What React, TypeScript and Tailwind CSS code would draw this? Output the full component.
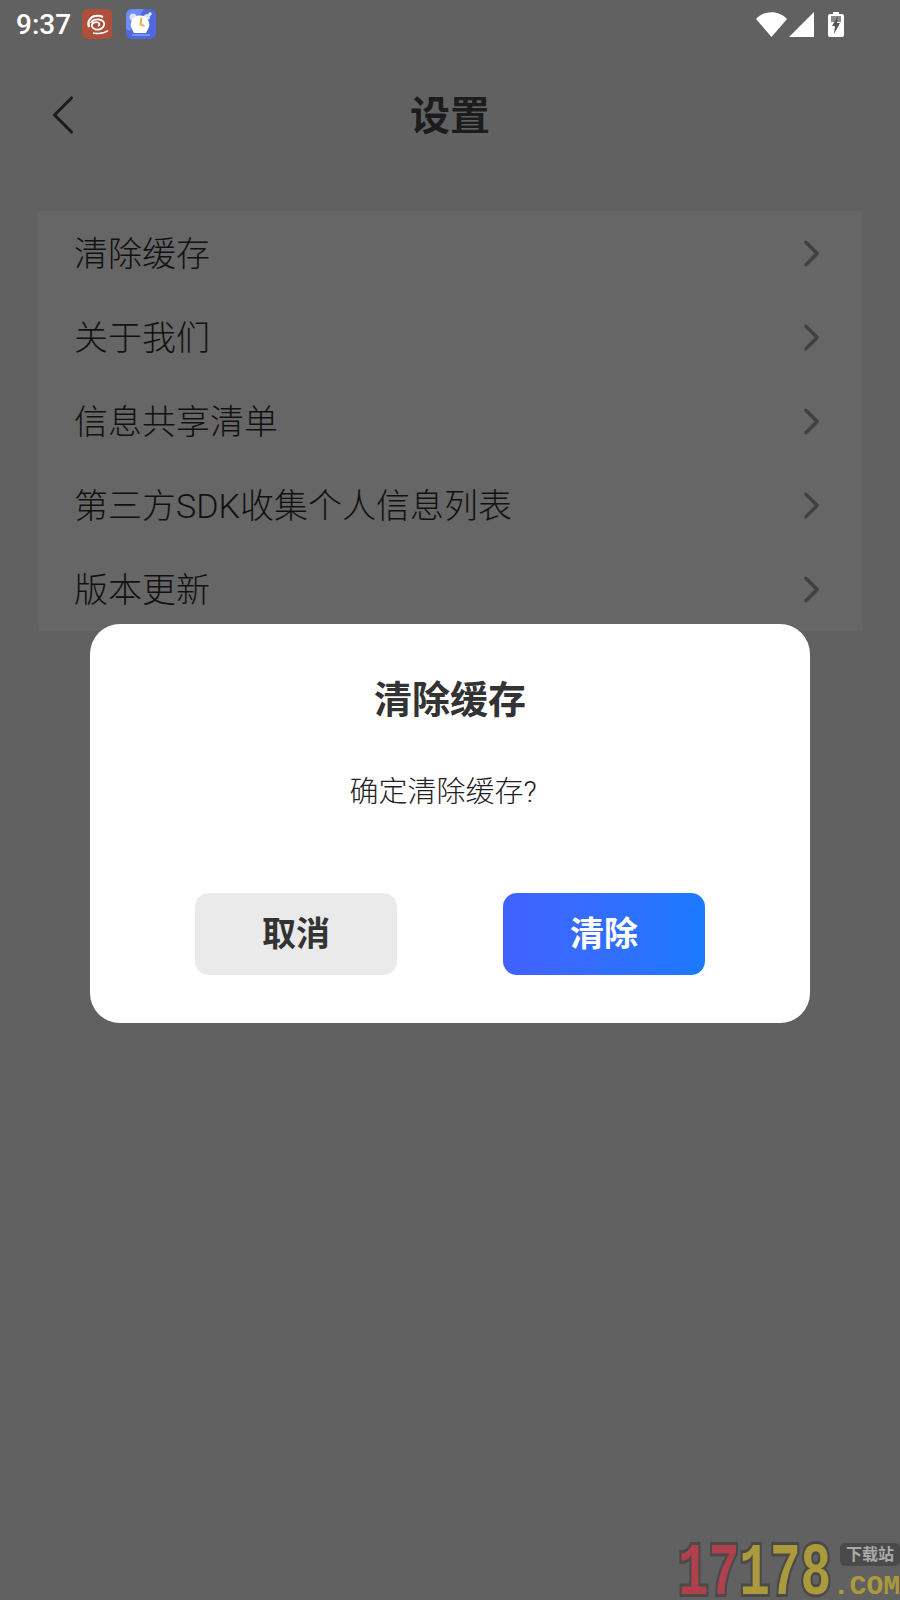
import { ChevronLeft, ChevronRight } from "lucide-react";

const rows = ["清除缓存", "关于我们", "信息共享清单", "第三方SDK收集个人信息列表", "版本更新"];

const cjk = { fontFamily: '"Roboto", "Noto Sans CJK SC", sans-serif' };
const mono = { fontFamily: '"Liberation Mono", monospace' };

function WeiboIcon() {
  return (
    <svg width="30" height="30" viewBox="0 0 30 30">
      <rect width="30" height="30" rx="5" fill="#ae4f3b" />
      <path d="M7 18c-2-5 1-10 6-11 3-.6 6 0 8 1" fill="none" stroke="#fff" strokeWidth="2.200" />
      <path d="M9 14c1-3 5-4 8-3.500 4 .6 6 3 5 6-1 3-5 4.500-8 4-3-.5-5-3-4-5 1-2 4-3 6-2 2 .8 2 3 0 3.500" fill="none" stroke="#fff" strokeWidth="1.800" />
      <path d="M11 24c5 1 11 .5 15-2.500" fill="none" stroke="#fff" strokeWidth="1.400" />
    </svg>
  );
}

function ClockIcon() {
  return (
    <svg width="30" height="30" viewBox="0 0 30 30">
      <rect width="30" height="30" rx="6" fill="#4f6ae0" />
      <path d="M0 6a6 6 0 0 1 6-6h12L4 22 0 20z" fill="#6f8cf5" />
      <circle cx="7" cy="8" r="3.500" fill="#dbe3ff" />
      <circle cx="21" cy="8" r="3" fill="#dbe3ff" />
      <path d="M14 6.500a9 9 0 0 1 8 13.500l-2 4H8l-2-4a9 9 0 0 1 8-13.500z" fill="#fff" />
      <path d="M15.500 8.500l-1 7 4 1.500" fill="none" stroke="#eda83a" strokeWidth="1.800" />
      <path d="M24 3v4M22 5h4" stroke="#fff" strokeWidth="1.200" />
      <path d="M6 26h18" stroke="#8aa0f0" strokeWidth="1.500" />
    </svg>
  );
}

function Watermark() {
  return (
    <div className="absolute bottom-0 right-0 h-[60px] w-[222px]">
      <div
        className="absolute left-0 top-[11px] flex origin-left scale-x-[0.69] text-[74px] font-bold leading-[46px] [-webkit-text-stroke:6px_#4a4a4a] [paint-order:stroke_fill]"
        style={mono}
      >
        <span className="text-[#b0404c]">17</span>
        <span className="text-[#ab9a3c]">178</span>
      </div>
      <div className="absolute right-0 top-[3px] flex h-[23px] w-[60px] items-center justify-center rounded-[5px] bg-[#4a4a4a] text-[16px] font-bold text-[#aaaaaa]" style={cjk}>
        下载站
      </div>
      <div
        className="absolute right-0 top-[35px] text-[28px] font-bold leading-[24px] text-[#ab9a3c]"
        style={mono}
      >
        .COM
      </div>
    </div>
  );
}

export default function App() {
  return (
    <div className="relative h-[1600px] w-[900px] overflow-hidden bg-[#616161]" style={cjk}>
      <div className="flex h-[50px] items-center pl-4 pr-[56px] text-white">
        <span className="text-[28px] font-medium leading-none">9:37</span>
        <div className="mb-[2px] ml-[11px] flex gap-[14px]">
          <WeiboIcon />
          <ClockIcon />
        </div>
        <div className="mb-[2px] ml-auto flex items-center">
          <svg width="31" height="25" viewBox="0 0 31 25">
            <path d="M0 7C8-2 23-2 31 7L15.500 25z" fill="#fff" />
          </svg>
          <svg className="ml-[2px]" width="25" height="25" viewBox="0 0 25 25">
            <path d="M25 0v25H0z" fill="#fff" />
          </svg>
          <svg className="ml-[14px]" width="16" height="25" viewBox="0 0 16 25">
            <path d="M5 0h6v2h3a2 2 0 0 1 2 2v19a2 2 0 0 1-2 2H2a2 2 0 0 1-2-2V4a2 2 0 0 1 2-2h3z" fill="#fff" />
            <path d="M3 4h10v6H3z" fill="#8a8a8a" />
            <path d="M10 4l-6 10h3l-1 8 6-11H9l1-7z" fill="#555555" />
          </svg>
        </div>
      </div>

      <div className="relative flex h-[134px] items-center justify-center">
        <ChevronLeft className="absolute left-[29px] top-[31px] text-[#1c1c1c]" size={68} strokeWidth={1.100} />
        <h1 className="text-[40px] font-bold text-[#1c1c1c]">设置</h1>
      </div>

      <div className="mx-[38px] mt-[27px] bg-[#666666] pl-[36px] pr-[28px]">
        {rows.map((row) => (
          <div key={row} className="flex h-[84px] items-center justify-between text-[34px] font-light text-[#111111]">
            <span className="pt-[3px]">{row}</span>
            <ChevronRight className="text-[#404040]" size={45} strokeWidth={1.800} />
          </div>
        ))}
      </div>

      <div className="absolute left-[90px] top-[624px] flex h-[399px] w-[720px] flex-col items-center rounded-[30px] bg-white">
        <h2 className="mt-[50px] text-[38px] font-bold leading-[52px] text-[#333333]">清除缓存</h2>
        <p className="mt-[44px] pr-[14px] text-[29px] font-light leading-[44px] text-[#222222]">确定清除缓存?</p>
        <div className="mb-[48px] mt-auto flex w-[510px] justify-between">
          <button className="h-[82px] w-[202px] rounded-[14px] bg-[#eaeaea] text-[34px] font-bold text-[#333333]">取消</button>
          <button className="h-[82px] w-[202px] rounded-[14px] bg-gradient-to-r from-[#4161ff] to-[#197aff] text-[34px] font-bold text-white">清除</button>
        </div>
      </div>

      <Watermark />
    </div>
  );
}
